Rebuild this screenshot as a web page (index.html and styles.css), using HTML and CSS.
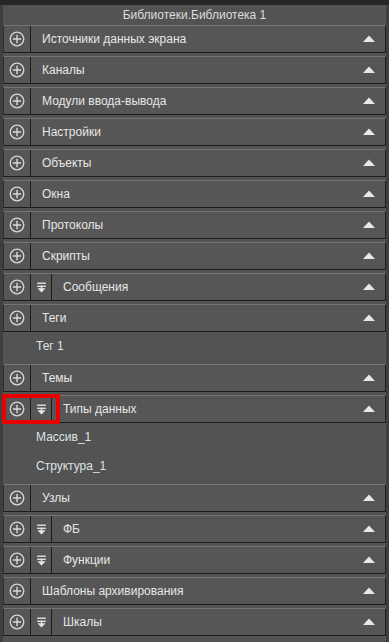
FILE: index.html
```html
<!DOCTYPE html>
<html lang="ru">
<head>
    <meta charset="UTF-8">
    <meta name="viewport" content="width=device-width, initial-scale=1.0">
    <title>Библиотеки.Библиотека 1</title>
    <link rel="stylesheet" href="styles.css">
</head>
<body>
    <svg width="0" height="0" class="defs">
        <symbol id="plus" viewBox="0 0 16 16">
            <circle cx="8" cy="8" r="6.8" fill="none" stroke="#d8d8d8" stroke-width="1.3"/>
            <path d="M8 3.8v8.4M3.8 8h8.4" stroke="#d8d8d8" stroke-width="1.4"/>
        </symbol>
        <symbol id="collapse" viewBox="0 0 10 10">
            <rect x="1" y="0.5" width="8" height="1.2" fill="#e6e6e6"/>
            <rect x="1" y="3.3" width="8" height="1.2" fill="#e6e6e6"/>
            <rect x="4.4" y="3.3" width="1.2" height="3" fill="#e6e6e6"/>
            <path d="M1.3 5.6h7.4L5 9.6z" fill="#e6e6e6"/>
        </symbol>
        <symbol id="up" viewBox="0 0 12 7">
            <path d="M0 7L6 0.6L12 7z" fill="#e8e8e8"/>
        </symbol>
    </svg>

    <div class="topbar"></div>
    <div class="panel">
        <div class="title">Библиотеки.Библиотека 1</div>

        <div class="group">
            <div class="head">
                <div class="btn"><svg class="ico-plus"><use href="#plus"/></svg></div>
                <span class="label">Источники данных экрана</span>
                <svg class="ico-up"><use href="#up"/></svg>
            </div>
        </div>

        <div class="group">
            <div class="head">
                <div class="btn"><svg class="ico-plus"><use href="#plus"/></svg></div>
                <span class="label">Каналы</span>
                <svg class="ico-up"><use href="#up"/></svg>
            </div>
        </div>

        <div class="group">
            <div class="head">
                <div class="btn"><svg class="ico-plus"><use href="#plus"/></svg></div>
                <span class="label">Модули ввода-вывода</span>
                <svg class="ico-up"><use href="#up"/></svg>
            </div>
        </div>

        <div class="group">
            <div class="head">
                <div class="btn"><svg class="ico-plus"><use href="#plus"/></svg></div>
                <span class="label">Настройки</span>
                <svg class="ico-up"><use href="#up"/></svg>
            </div>
        </div>

        <div class="group">
            <div class="head">
                <div class="btn"><svg class="ico-plus"><use href="#plus"/></svg></div>
                <span class="label">Объекты</span>
                <svg class="ico-up"><use href="#up"/></svg>
            </div>
        </div>

        <div class="group">
            <div class="head">
                <div class="btn"><svg class="ico-plus"><use href="#plus"/></svg></div>
                <span class="label">Окна</span>
                <svg class="ico-up"><use href="#up"/></svg>
            </div>
        </div>

        <div class="group">
            <div class="head">
                <div class="btn"><svg class="ico-plus"><use href="#plus"/></svg></div>
                <span class="label">Протоколы</span>
                <svg class="ico-up"><use href="#up"/></svg>
            </div>
        </div>

        <div class="group">
            <div class="head">
                <div class="btn"><svg class="ico-plus"><use href="#plus"/></svg></div>
                <span class="label">Скрипты</span>
                <svg class="ico-up"><use href="#up"/></svg>
            </div>
        </div>

        <div class="group">
            <div class="head">
                <div class="btn"><svg class="ico-plus"><use href="#plus"/></svg></div>
                <div class="btn small"><svg class="ico-collapse"><use href="#collapse"/></svg></div>
                <span class="label">Сообщения</span>
                <svg class="ico-up"><use href="#up"/></svg>
            </div>
        </div>

        <div class="group">
            <div class="head">
                <div class="btn"><svg class="ico-plus"><use href="#plus"/></svg></div>
                <span class="label">Теги</span>
                <svg class="ico-up"><use href="#up"/></svg>
            </div>
            <div class="item">Тег 1</div>
        </div>

        <div class="group">
            <div class="head">
                <div class="btn"><svg class="ico-plus"><use href="#plus"/></svg></div>
                <span class="label">Темы</span>
                <svg class="ico-up"><use href="#up"/></svg>
            </div>
        </div>

        <div class="group">
            <div class="head">
                <div class="btn"><svg class="ico-plus"><use href="#plus"/></svg></div>
                <div class="btn small"><svg class="ico-collapse"><use href="#collapse"/></svg></div>
                <span class="label">Типы данных</span>
                <svg class="ico-up"><use href="#up"/></svg>
                <div class="highlight"></div>
            </div>
            <div class="item">Массив_1</div>
            <div class="item">Структура_1</div>
        </div>

        <div class="group">
            <div class="head">
                <div class="btn"><svg class="ico-plus"><use href="#plus"/></svg></div>
                <span class="label">Узлы</span>
                <svg class="ico-up"><use href="#up"/></svg>
            </div>
        </div>

        <div class="group">
            <div class="head">
                <div class="btn"><svg class="ico-plus"><use href="#plus"/></svg></div>
                <div class="btn small"><svg class="ico-collapse"><use href="#collapse"/></svg></div>
                <span class="label">ФБ</span>
                <svg class="ico-up"><use href="#up"/></svg>
            </div>
        </div>

        <div class="group">
            <div class="head">
                <div class="btn"><svg class="ico-plus"><use href="#plus"/></svg></div>
                <div class="btn small"><svg class="ico-collapse"><use href="#collapse"/></svg></div>
                <span class="label">Функции</span>
                <svg class="ico-up"><use href="#up"/></svg>
            </div>
        </div>

        <div class="group">
            <div class="head">
                <div class="btn"><svg class="ico-plus"><use href="#plus"/></svg></div>
                <span class="label">Шаблоны архивирования</span>
                <svg class="ico-up"><use href="#up"/></svg>
            </div>
        </div>

        <div class="group">
            <div class="head">
                <div class="btn"><svg class="ico-plus"><use href="#plus"/></svg></div>
                <div class="btn small"><svg class="ico-collapse"><use href="#collapse"/></svg></div>
                <span class="label">Шкалы</span>
                <svg class="ico-up"><use href="#up"/></svg>
            </div>
        </div>
    </div>
</body>
</html>
```

FILE: styles.css
```css
body {
    margin: 0;
    background-color: #3f3f3f;
    font-family: "Liberation Sans", Arial, sans-serif;
    font-size: 12px;
    color: #e6e6e6;
    height: 642px;
    overflow: hidden;
}

.defs {
    position: absolute;
}

.topbar {
    height: 5px;
    background-color: #262626;
}

.panel {
    margin: 0 3px;
    background-color: #535353;
    height: 637px;
}

.title {
    height: 20px;
    line-height: 20px;
    text-align: center;
    color: #dcdcdc;
}

.group {
    margin-bottom: 3px;
}

.head {
    position: relative;
    display: flex;
    align-items: center;
    height: 26px;
    background-color: #565656;
    border-top: 1px solid #747474;
    border-bottom: 1px solid #1c1c1c;
    border-left: 1px solid #2e2e2e;
    border-right: 1px solid #1c1c1c;
}

.btn {
    width: 26px;
    height: 100%;
    display: flex;
    align-items: center;
    justify-content: center;
    border-right: 1px solid #1c1c1c;
    flex-shrink: 0;
}

.btn.small {
    width: 20px;
}

.ico-plus {
    width: 16px;
    height: 16px;
}

.ico-collapse {
    width: 11px;
    height: 11px;
    margin-top: 1px;
}

.label {
    flex: 1;
    padding-left: 11px;
    white-space: nowrap;
}

.ico-up {
    width: 12px;
    height: 7px;
    margin-right: 10px;
    margin-bottom: 1px;
}

.item {
    height: 29px;
    line-height: 29px;
    padding-left: 33px;
    color: #dde2e6;
}

.highlight {
    position: absolute;
    left: -2px;
    top: -2px;
    width: 50px;
    height: 22px;
    border: 4px solid #e80000;
}
```
